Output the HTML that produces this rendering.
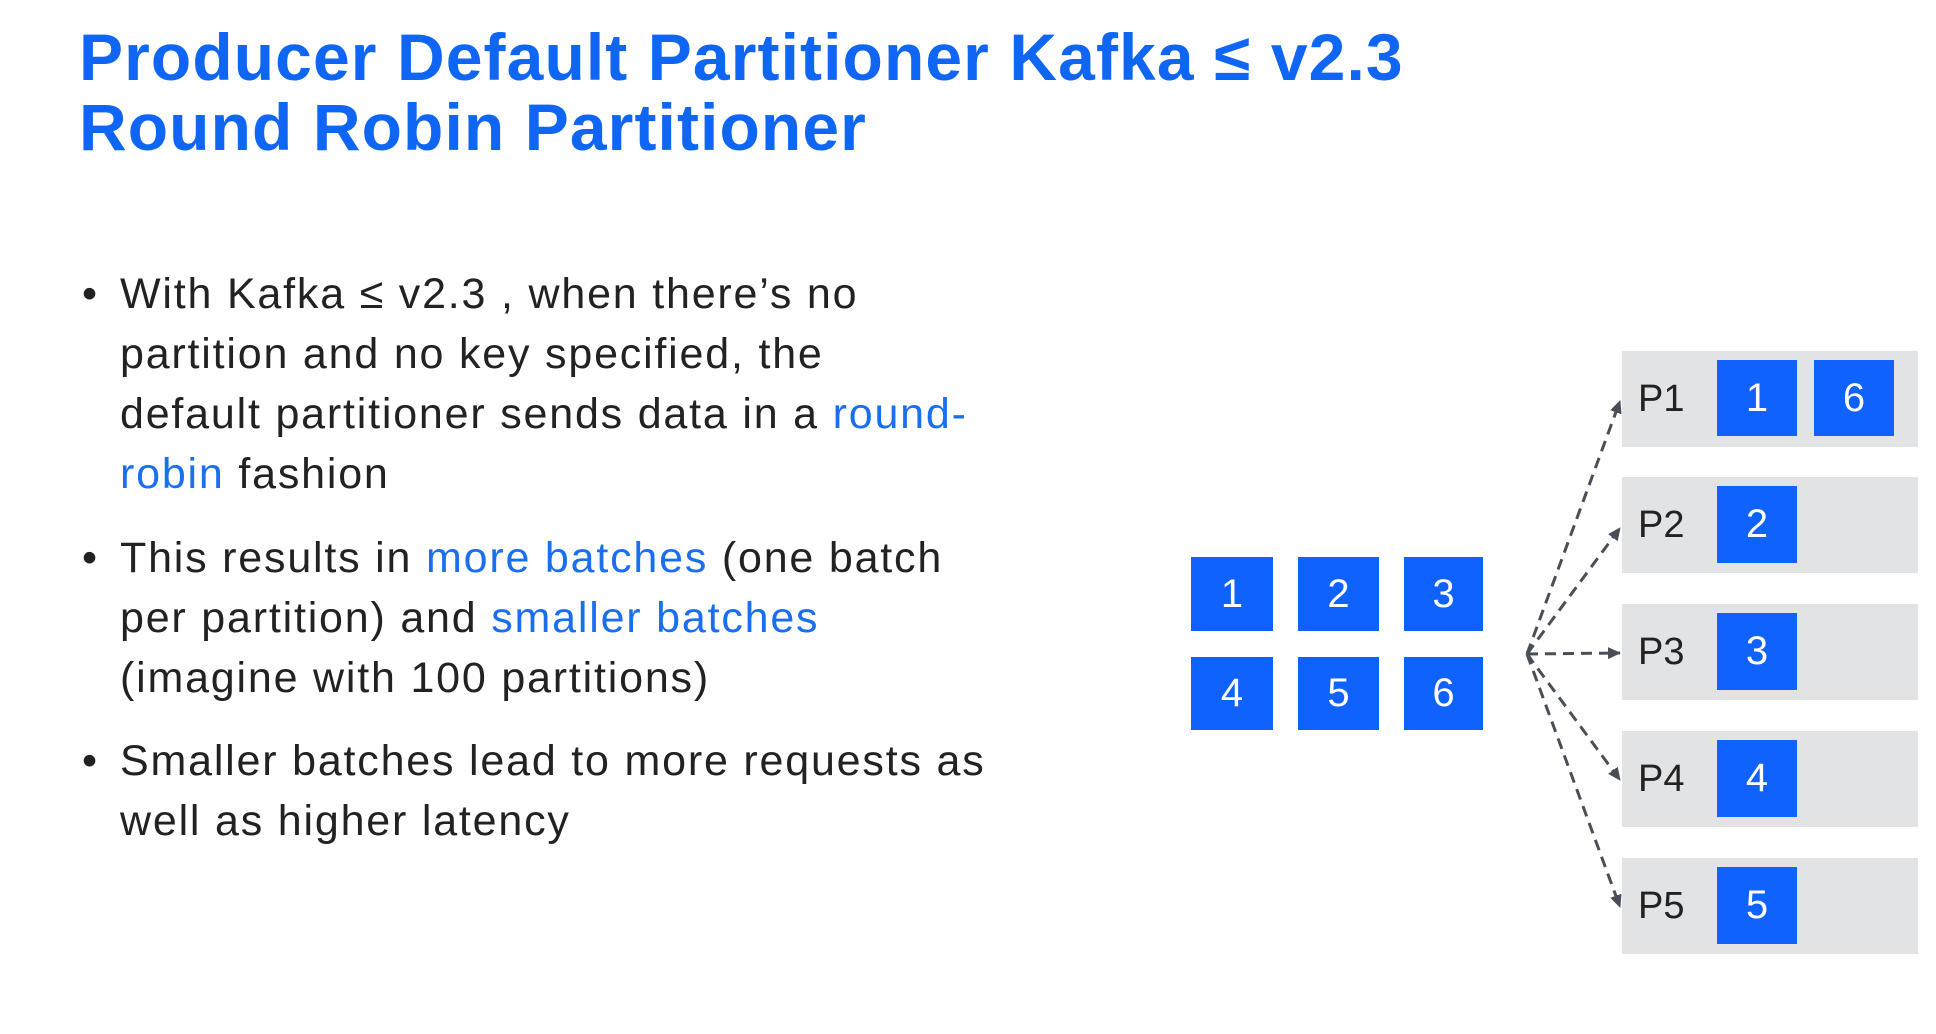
<!DOCTYPE html>
<html><head><meta charset="utf-8"><style>
html,body{margin:0;padding:0;background:#fff;width:1936px;height:1034px;overflow:hidden;position:relative;font-family:"Liberation Sans",sans-serif}
.t{position:absolute;left:79px;color:#0f66f5;font-weight:bold;font-size:66px;letter-spacing:1.1px;line-height:70px;white-space:nowrap}
.b{position:absolute;left:120px;font-size:43px;letter-spacing:1.8px;color:#222;line-height:60px;white-space:nowrap}
.b .d{position:absolute;left:-38px}
.bl{color:#1a6ff0}
.sq{position:absolute;background:#0f62fe;color:#fff;font-size:40px;display:flex;align-items:center;justify-content:center}
.row{position:absolute;left:1622px;width:296px;height:96px;background:#e2e3e5}
.lab{position:absolute;left:1638px;font-size:38px;color:#222;line-height:36px}
</style></head><body>
<div class="t" style="top:22px">Producer Default Partitioner Kafka ≤ v2.3</div>
<div class="t" style="top:92px">Round Robin Partitioner</div>

<div class="b" style="top:264px"><span class="d">•</span>With Kafka ≤ v2.3 , when there’s no<br>partition and no key specified, the<br>default partitioner sends data in a <span class="bl">round-</span><br><span class="bl">robin</span> fashion</div>
<div class="b" style="top:528px"><span class="d">•</span>This results in <span class="bl">more batches</span> (one batch<br>per partition) and <span class="bl">smaller batches</span><br>(imagine with 100 partitions)</div>
<div class="b" style="top:731px"><span class="d">•</span>Smaller batches lead to more requests as<br>well as higher latency</div>

<div class="sq" style="left:1191px;top:557px;width:82px;height:74px">1</div>
<div class="sq" style="left:1298px;top:557px;width:81px;height:74px">2</div>
<div class="sq" style="left:1404px;top:557px;width:79px;height:74px">3</div>
<div class="sq" style="left:1191px;top:657px;width:82px;height:73px">4</div>
<div class="sq" style="left:1298px;top:657px;width:81px;height:73px">5</div>
<div class="sq" style="left:1404px;top:657px;width:79px;height:73px">6</div>

<div class="row" style="top:351px"></div>
<div class="row" style="top:477px"></div>
<div class="row" style="top:604px"></div>
<div class="row" style="top:731px"></div>
<div class="row" style="top:858px"></div>
<div class="lab" style="top:381px">P1</div>
<div class="lab" style="top:507px">P2</div>
<div class="lab" style="top:634px">P3</div>
<div class="lab" style="top:761px">P4</div>
<div class="lab" style="top:888px">P5</div>
<div class="sq" style="left:1717px;top:360px;width:80px;height:76px">1</div>
<div class="sq" style="left:1814px;top:360px;width:80px;height:76px">6</div>
<div class="sq" style="left:1717px;top:486px;width:80px;height:77px">2</div>
<div class="sq" style="left:1717px;top:613px;width:80px;height:77px">3</div>
<div class="sq" style="left:1717px;top:740px;width:80px;height:77px">4</div>
<div class="sq" style="left:1717px;top:867px;width:80px;height:77px">5</div>

<svg style="position:absolute;left:0;top:0" width="1936" height="1034">
<defs><marker id="a" markerWidth="14" markerHeight="14" refX="12" refY="7" orient="auto" markerUnits="userSpaceOnUse"><path d="M0,1 L13,7 L0,13z" fill="#4a4f57"/></marker></defs>
<g stroke="#4a4f57" stroke-width="3" stroke-dasharray="11,7" fill="none" marker-end="url(#a)">
<path d="M1527,654 L1620,401"/>
<path d="M1527,654 L1620,528"/>
<path d="M1527,654 L1620,653"/>
<path d="M1527,654 L1620,780"/>
<path d="M1527,654 L1620,907"/>
</g></svg>
</body></html>
